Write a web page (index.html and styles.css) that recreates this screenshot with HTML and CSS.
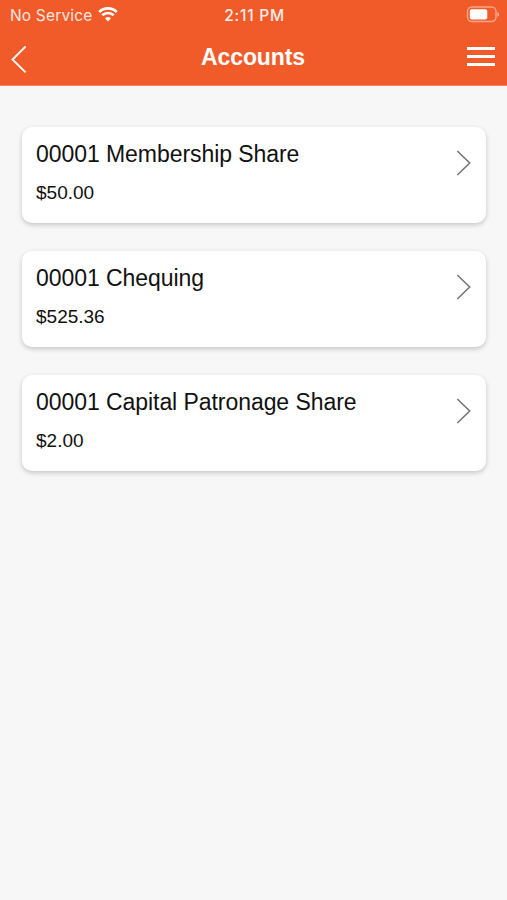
FILE: index.html
```html
<!DOCTYPE html>
<html lang="en">
<head>
    <meta charset="UTF-8">
    <meta name="viewport" content="width=device-width, initial-scale=1.0">
    <title>Accounts</title>
    <link rel="stylesheet" href="styles.css">
</head>
<body>
    <header class="header">
        <div class="status-bar">
            <div class="carrier">
                <span class="carrier-name">No Service</span>
                <svg class="wifi" width="20" height="16" viewBox="0 0 20 16" fill="none" stroke="#fff" stroke-width="2.7">
                    <path d="M1.2 6 A12.6 12.6 0 0 1 18.8 6"/>
                    <path d="M4.3 9.3 A8.2 8.2 0 0 1 15.7 9.3"/>
                    <path d="M10 15.4 L7 12.3 A4.4 4.4 0 0 1 13 12.3 Z" fill="#fff" stroke="none"/>
                </svg>
            </div>
            <span class="time">2:11 PM</span>
            <svg class="battery" width="33" height="17" viewBox="0 0 33 17">
                <rect x="1.5" y="1" width="28.5" height="14.5" rx="4.5" fill="none" stroke="#fff" stroke-opacity="0.45" stroke-width="1.4"/>
                <rect x="3.8" y="3.2" width="17.5" height="10.2" rx="1.8" fill="#fff"/>
                <path d="M31.3 6 A2.6 2.6 0 0 1 31.3 11 Z" fill="#fff" fill-opacity="0.5"/>
            </svg>
        </div>
        <div class="nav-bar">
            <button class="nav-btn back-btn" aria-label="Back">
                <svg width="17" height="28" viewBox="0 0 17 28" fill="none" stroke="#fff" stroke-width="1.8">
                    <path d="M14.6 1.5 L1.5 14.5 L14.6 27.3"/>
                </svg>
            </button>
            <h1>Accounts</h1>
            <button class="nav-btn menu-btn" aria-label="Menu">
                <span></span>
                <span></span>
                <span></span>
            </button>
        </div>
    </header>

    <main class="accounts">
        <a class="account-card">
            <div>
                <h2>00001 Membership Share</h2>
                <p class="balance">$50.00</p>
            </div>
            <svg class="chevron" width="16" height="26" viewBox="0 0 16 26"><path d="M1.3 1 L13.7 13 L1.3 25"/></svg>
        </a>
        <a class="account-card">
            <div>
                <h2>00001 Chequing</h2>
                <p class="balance">$525.36</p>
            </div>
            <svg class="chevron" width="16" height="26" viewBox="0 0 16 26"><path d="M1.3 1 L13.7 13 L1.3 25"/></svg>
        </a>
        <a class="account-card">
            <div>
                <h2>00001 Capital Patronage Share</h2>
                <p class="balance">$2.00</p>
            </div>
            <svg class="chevron" width="16" height="26" viewBox="0 0 16 26"><path d="M1.3 1 L13.7 13 L1.3 25"/></svg>
        </a>
    </main>
</body>
</html>
```

FILE: styles.css
```css
* {
    box-sizing: border-box;
}

body {
    margin: 0;
    min-height: 100vh;
    font-family: "Liberation Sans", Arial, sans-serif;
    background-color: #f7f7f7;
    color: #111;
}

.header {
    height: 86px;
    background: #f15b2a;
    border-bottom: 1px solid #f4855f;
    color: #fff;
}

.status-bar {
    display: grid;
    grid-template-columns: 1fr auto 1fr;
    align-items: center;
    height: 29px;
    padding: 0 8px 0 10px;
    font-family: Inter, sans-serif;
    font-size: 15.5px;
}

.carrier {
    display: flex;
    align-items: center;
    gap: 6px;
}

.carrier-name {
    padding-top: 1px;
    letter-spacing: 0.17px;
    opacity: 0.85;
}

.wifi {
    margin-bottom: 1px;
}

.time {
    padding-top: 1px;
    font-weight: 500;
    letter-spacing: 0.75px;
    opacity: 0.9;
}

.battery {
    justify-self: end;
}

.nav-bar {
    display: flex;
    align-items: center;
    justify-content: space-between;
    height: 56px;
    padding: 0 12px 0 11px;
}

.nav-bar h1 {
    margin: 0;
    font-size: 23px;
    line-height: 28px;
    letter-spacing: -0.1px;
}

.nav-btn {
    display: flex;
    width: 28px;
    padding: 0;
    background: none;
    border: none;
    cursor: pointer;
}

.back-btn {
    padding-top: 4px;
}

.menu-btn {
    flex-direction: column;
    gap: 5px;
    padding-bottom: 2px;
}

.menu-btn span {
    height: 3px;
    background: #fff;
}

.accounts {
    display: flex;
    flex-direction: column;
    gap: 28px;
    padding: 41px 21px 0 22px;
}

.account-card {
    display: flex;
    justify-content: space-between;
    height: 96px;
    padding: 13px 14px;
    background: #fff;
    border-radius: 10px;
    box-shadow: 0 2px 5px rgba(0, 0, 0, 0.2);
    cursor: pointer;
}

.account-card h2 {
    margin: 0;
    font-size: 23px;
    font-weight: normal;
    line-height: 28px;
    letter-spacing: -0.06px;
}

.balance {
    margin: 13px 0 0;
    font-size: 19px;
    line-height: 24px;
}

.chevron {
    margin-top: 10px;
    fill: none;
    stroke: #777;
    stroke-width: 1.6;
}
```
